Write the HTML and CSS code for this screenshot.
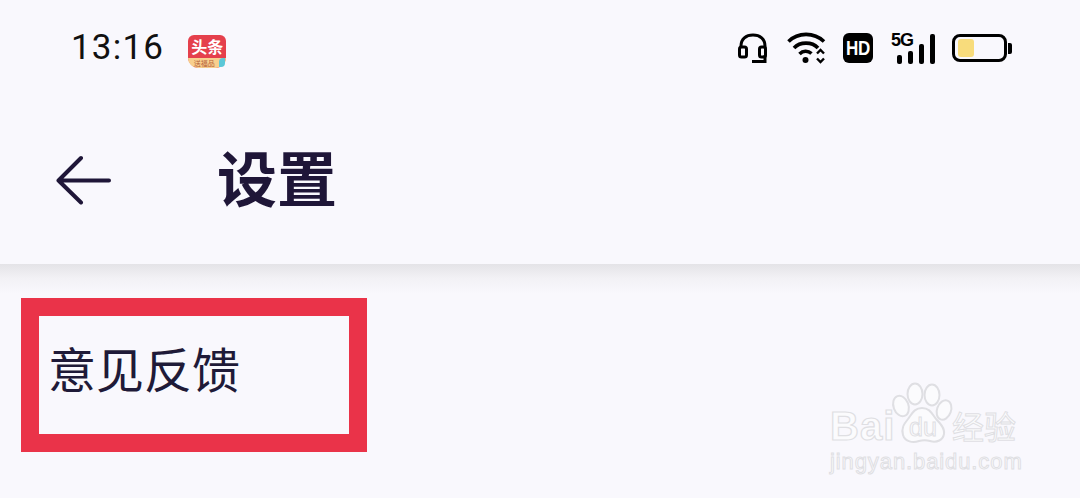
FILE: index.html
```html
<!DOCTYPE html>
<html lang="zh-CN">
<head>
    <meta charset="UTF-8">
    <meta name="viewport" content="width=device-width, initial-scale=1.0">
    <title>设置</title>
    <link rel="stylesheet" href="styles.css">
</head>
<body>
    <div class="page">
        <header class="top">
            <div class="status-bar">
                <div class="status-left">
                    <span class="time">13:16</span>
                    <div class="app-badge">
                        <span class="app-name">头条</span>
                        <span class="app-sub">送福品</span>
                    </div>
                </div>
                <div class="status-right">
                    <svg class="icon-headset" width="30" height="30" viewBox="0 0 30 30">
                        <path d="M3 19 V13 C3 6 8 2 15 2 C22 2 27 6 27 13 V19" fill="none" stroke="#000" stroke-width="3"/>
                        <rect x="1.5" y="14" width="7" height="10" rx="2" fill="#f9f8fd" stroke="#000" stroke-width="3"/>
                        <rect x="21.5" y="14" width="6" height="10" rx="2" fill="#f9f8fd" stroke="#000" stroke-width="3"/>
                        <path d="M14 28.5 H27 V22" fill="none" stroke="#000" stroke-width="3"/>
                    </svg>
                    <svg class="icon-wifi" width="40" height="32" viewBox="0 0 40 32">
                        <path d="M1.5 9.5 C11 0 27 0 37 9.5" fill="none" stroke="#000" stroke-width="3.6"/>
                        <path d="M7 16 C13 9.5 25 9.5 31 16" fill="none" stroke="#000" stroke-width="3.6"/>
                        <path d="M12.5 22 C16 18.5 21 18.5 24.5 21.5" fill="none" stroke="#000" stroke-width="3.6"/>
                        <circle cx="18.5" cy="28" r="3" fill="#000"/>
                        <path d="M30 21.5 L33.5 18 L37 21.5 M30 26.5 L33.5 30 L37 26.5" fill="none" stroke="#000" stroke-width="2.4"/>
                    </svg>
                    <div class="hd-badge"><span class="hd-text">HD</span></div>
                    <div class="signal">
                        <span class="net-type">5G</span>
                        <div class="bars">
                            <i class="bar bar-1"></i>
                            <i class="bar bar-2"></i>
                            <i class="bar bar-3"></i>
                            <i class="bar bar-4"></i>
                        </div>
                    </div>
                    <div class="battery">
                        <div class="battery-body"><div class="battery-level"></div></div>
                        <div class="battery-cap"></div>
                    </div>
                </div>
            </div>
            <div class="app-bar">
                <svg class="back" width="56" height="50" viewBox="0 0 56 50">
                    <path d="M25 3 L2.5 25.5 L25 47.5 M2.5 25.5 H53" fill="none" stroke="#1f1638" stroke-width="4" stroke-linecap="round" stroke-linejoin="round"/>
                </svg>
                <h1 class="title">设置</h1>
            </div>
        </header>
        <main class="content">
            <div class="highlight">
                <span class="row-text">意见反馈</span>
            </div>
        </main>
        <div class="watermark">
            <span class="wm-bai">Bai</span>
            <svg class="wm-paw" width="75" height="68" viewBox="0 0 75 68">
                <g fill="#fbfbfd" stroke="#dfdfe3" stroke-width="2">
                    <ellipse cx="16" cy="28" rx="7.5" ry="10.5" transform="rotate(-20 16 28)"/>
                    <ellipse cx="30" cy="16" rx="7.5" ry="10.5"/>
                    <ellipse cx="47" cy="17" rx="7.5" ry="10.5"/>
                    <ellipse cx="59" cy="32" rx="7" ry="10" transform="rotate(20 59 32)"/>
                    <path d="M37 30 C29 30 27 36 23 41 C19 46 16 50 18 57 C20 64 28 65 34 63 C38 62 41 62 45 63 C52 65 58 62 59 56 C60 50 55 45 51 41 C47 36 45 30 37 30 Z"/>
                </g>
                <text class="wm-du" x="24" y="58">du</text>
            </svg>
            <span class="wm-cn">经验</span>
            <div class="wm-url">jingyan.baidu.com</div>
        </div>
    </div>
</body>
</html>
```

FILE: styles.css
```css
html, body {
    margin: 0;
    padding: 0;
}
body {
    background: #f9f8fd;
    font-family: "Noto Sans CJK SC", "Noto Sans", sans-serif;
    overflow: hidden;
}
.page {
    position: relative;
    width: 1080px;
    height: 498px;
    overflow: hidden;
}
.top {
    height: 264px;
    background: #f9f8fd;
}
.status-bar {
    height: 96px;
    display: flex;
    justify-content: space-between;
    align-items: center;
    padding: 0 68px 0 71px;
}
.status-left {
    display: flex;
    align-items: center;
    gap: 24px;
}
.time {
    font-family: Roboto, sans-serif;
    font-size: 35px;
    letter-spacing: 1.2px;
    color: #111;
    line-height: 40px;
}
.app-badge {
    width: 38px;
    height: 33px;
    margin-top: 6px;
    border-radius: 6px 6px 11px 11px;
    background: #e5404c;
    position: relative;
    text-align: center;
}
.app-badge::after {
    content: "";
    position: absolute;
    right: 1px;
    bottom: 1px;
    width: 6px;
    height: 9px;
    background: #5cc8d8;
    border-radius: 4px 0 4px 0;
}
.app-name {
    display: block;
    height: 23px;
    font-size: 16px;
    line-height: 23px;
    font-weight: 700;
    color: #fff;
}
.app-sub {
    display: block;
    height: 10px;
    background: #f8cf8e;
    border-radius: 0 0 11px 11px;
    font-size: 7px;
    line-height: 10px;
    color: #b5603a;
    padding-right: 6px;
}
.status-right {
    display: flex;
    align-items: center;
}
.icon-headset {
    margin-right: 19px;
}
.icon-wifi {
    margin-right: 16px;
}
.hd-badge {
    width: 30px;
    height: 30px;
    background: #000;
    border-radius: 6px;
    color: #fff;
    font-family: "Liberation Sans", sans-serif;
    font-weight: 700;
    font-size: 20px;
    line-height: 30px;
    text-align: center;
    margin-right: 18px;
}
.hd-text {
    display: inline-block;
    letter-spacing: -0.5px;
    transform: scaleX(0.85);
}
.signal {
    position: relative;
    width: 45px;
    height: 32px;
    margin-right: 16px;
}
.net-type {
    position: absolute;
    left: 0;
    top: 0;
    font-family: "Liberation Sans", sans-serif;
    font-weight: 700;
    font-size: 18px;
    line-height: 16px;
    letter-spacing: -1px;
    color: #000;
}
.bars {
    height: 32px;
    display: flex;
    align-items: flex-end;
    gap: 6px;
    padding-left: 6px;
}
.bar {
    display: block;
    width: 5px;
    background: #000;
    border-radius: 2px;
}
.bar-1 { height: 9px; }
.bar-2 { height: 13px; }
.bar-3 { height: 20px; }
.bar-4 { height: 30px; }
.battery {
    display: flex;
    align-items: center;
}
.battery-body {
    border: 3px solid #000;
    border-radius: 8px;
    width: 43px;
    height: 18px;
    padding: 2px 3px;
}
.battery-level {
    width: 16px;
    height: 100%;
    background: #f8dc7c;
    border-radius: 3px;
}
.battery-cap {
    width: 4px;
    height: 11px;
    background: #000;
    border-radius: 0 2px 2px 0;
    margin-left: 1px;
}
.app-bar {
    height: 168px;
    display: flex;
    align-items: center;
    padding-left: 56px;
    box-sizing: border-box;
}
.back {
    margin-right: 105px;
}
.title {
    margin: 0 0 8px;
    font-size: 60px;
    line-height: 70px;
    font-weight: 700;
    color: #1f1638;
}
.content {
    height: 234px;
    padding: 34px 0 0 21px;
    box-sizing: border-box;
    background: linear-gradient(#e4e3e7 0, #f2f1f5 14px, #f9f8fd 30px);
}
.highlight {
    width: 346px;
    height: 154px;
    box-sizing: border-box;
    border: 18px solid #ea3349;
    display: flex;
    align-items: center;
    padding: 0 0 16px 9px;
    background: #f9f8fd;
}
.row-text {
    font-size: 48px;
    line-height: 60px;
    color: #1f1a38;
}
.watermark {
    position: absolute;
    left: 830px;
    top: 378px;
    width: 195px;
    height: 100px;
    color: #fbfbfd;
    font-family: "Liberation Sans", sans-serif;
}
.wm-bai {
    position: absolute;
    left: 0;
    top: 26px;
    font-size: 40px;
    line-height: 44px;
    font-weight: 700;
    letter-spacing: 1px;
    -webkit-text-stroke: 1.2px #dfdfe3;
}
.wm-paw {
    position: absolute;
    left: 55px;
    top: 0;
}
.wm-du {
    font-family: "Liberation Sans", sans-serif;
    font-size: 25px;
    fill: #fbfbfd;
    stroke: #dfdfe3;
    stroke-width: 1;
}
.wm-cn {
    position: absolute;
    left: 122px;
    top: 25px;
    font-family: "Noto Sans CJK SC", sans-serif;
    font-size: 32px;
    line-height: 44px;
    white-space: nowrap;
    -webkit-text-stroke: 1px #dfdfe3;
}
.wm-url {
    position: absolute;
    left: 0;
    top: 71px;
    font-size: 22px;
    line-height: 26px;
    letter-spacing: 0.9px;
    white-space: nowrap;
    -webkit-text-stroke: 1px #dfdfe3;
}
```
